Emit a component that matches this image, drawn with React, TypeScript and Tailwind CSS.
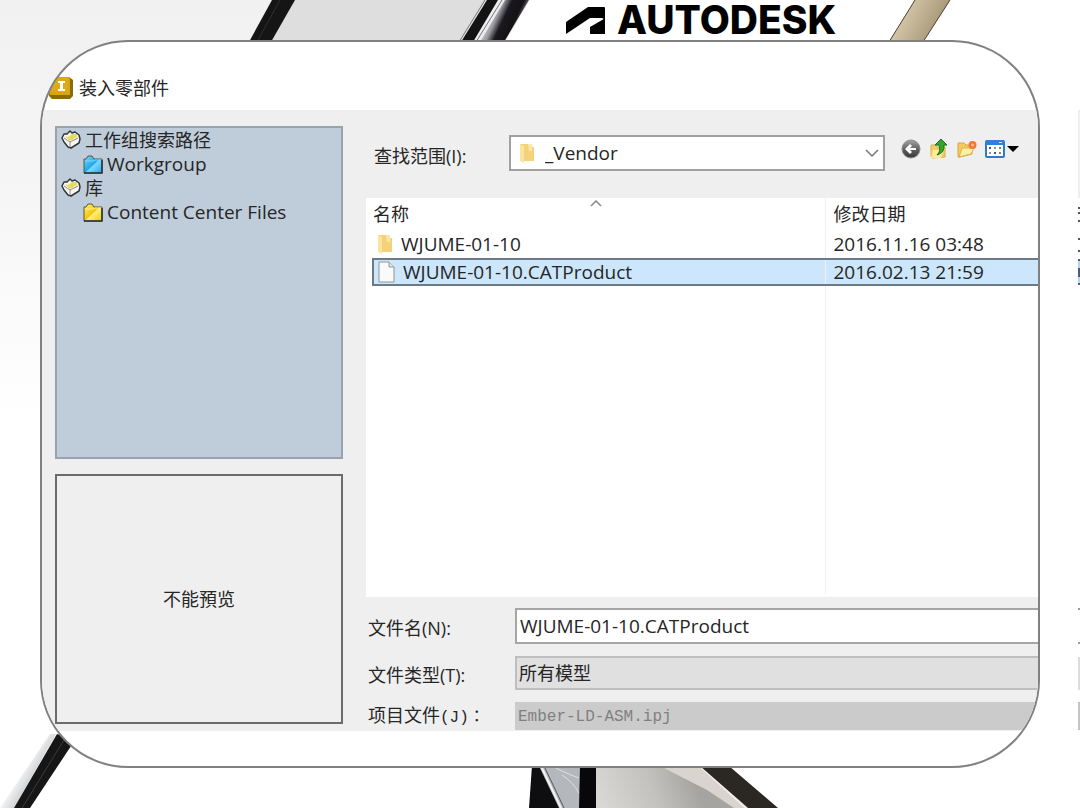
import type { ReactNode } from "react";

const files = [
  { name: "WJUME-01-10", date: "2016.11.16 03:48", kind: "folder", selected: false },
  { name: "WJUME-01-10.CATProduct", date: "2016.02.13 21:59", kind: "file", selected: true },
];

function Backdrop() {
  return (
    <svg
      aria-hidden
      className="absolute inset-0 -z-10 h-full w-full"
      viewBox="0 0 1080 808"
      preserveAspectRatio="none"
    >
      <defs>
        <linearGradient id="wall" x1="0" y1="0" x2="0" y2="1">
          <stop offset="0" stopColor="#f1f1f1" />
          <stop offset="0.4" stopColor="#f5f5f5" />
          <stop offset="1" stopColor="#ffffff" />
        </linearGradient>
        <linearGradient id="tube" gradientUnits="userSpaceOnUse" x1="484" y1="15" x2="516" y2="30">
          <stop offset="0" stopColor="#f4f4f6" />
          <stop offset="0.35" stopColor="#9b9ba3" />
          <stop offset="0.55" stopColor="#1b181d" />
          <stop offset="0.85" stopColor="#151216" />
          <stop offset="1" stopColor="#6e6a70" />
        </linearGradient>
        <linearGradient id="brass" gradientUnits="userSpaceOnUse" x1="900" y1="12" x2="935" y2="30">
          <stop offset="0" stopColor="#d8cbab" />
          <stop offset="1" stopColor="#a8997a" />
        </linearGradient>
        <linearGradient id="steel" gradientUnits="userSpaceOnUse" x1="596" y1="808" x2="690" y2="770">
          <stop offset="0" stopColor="#dcdad6" />
          <stop offset="0.6" stopColor="#c3c1bd" />
          <stop offset="1" stopColor="#a6a4a1" />
        </linearGradient>
        <linearGradient id="shade" gradientUnits="userSpaceOnUse" x1="24" y1="760" x2="42" y2="771">
          <stop offset="0" stopColor="#ffffff" />
          <stop offset="1" stopColor="#c4c6c8" />
        </linearGradient>
      </defs>
      <rect width="1080" height="808" fill="#fff" />
      <rect width="300" height="420" fill="url(#wall)" />
      <path d="M295 0H490L462 42H270Z" fill="#dedede" />
      <path d="M272 0H295L271 42H249Z" fill="#151515" />
      <path d="M280 0L257 42" stroke="#303030" strokeWidth="1" />
      <path d="M488 0H530L505 42H462Z" fill="#ededf0" />
      <path d="M487 0H498L473 42H461Z" fill="#131313" />
      <path d="M485 0L459 42M502 0L476 42" stroke="#777" strokeWidth="1" />
      <path d="M505 0H529L504 42H480Z" fill="url(#tube)" />
      <path d="M915 0H950L923 42H889Z" fill="url(#brass)" />
      <path d="M915 0L889 42M950 0L923 42" stroke="#47402f" strokeWidth="1" />
      <path d="M56 734L14 808H0L50 734Z" fill="url(#shade)" />
      <path d="M57 734L75 740L30 808H14Z" fill="#161616" />
      <path d="M64 740L22 808" stroke="#3c3c3c" strokeWidth="1" />

      <path d="M532 766H580V808H530Z" fill="#b4b7bb" />
      <path d="M532 766H539L559 808H529Z" fill="#0e0e10" />
      <path d="M541 766L561 808" stroke="#f3f3f3" strokeWidth="2" />
      <path d="M544 766L564 808" stroke="#55575b" strokeWidth="1" />
      <path d="M556 768Q570 775 579 778M562 775Q573 782 579 793" fill="none" stroke="#dfe1e3" strokeWidth="1" />
      <path d="M580 766H596V808H579Z" fill="#08080a" />
      <path d="M596 766H700L747 808H596Z" fill="url(#steel)" />
      <path d="M660 766H700L748 808H734L707 790Z" fill="#d9d4cd" />
      <path d="M702 768L746 808" stroke="#f3efe9" strokeWidth="2" />
      <path d="M700 766H729L778 808H748Z" fill="#2b2823" />

      <path d="M1078 110H1080V198H1078Z" fill="#efefef" />
      <path d="M1078 207H1080V209H1078ZM1078 212H1080V214H1078ZM1078 220H1080V222H1078ZM1078 238H1080V240H1078ZM1078 250H1080V252H1078Z" fill="#555" />
      <path d="M1078 259H1080V285H1078Z" fill="#b9d3ea" />
      <path d="M1078 259H1080V261H1078ZM1078 268H1080V277H1078ZM1078 283H1080V285H1078Z" fill="#515a78" />
      <path d="M1078 608H1080V610H1078ZM1078 642H1080V644H1078Z" fill="#999" />
      <path d="M1078 657H1080V690H1078Z" fill="#dcdcdc" />
      <path d="M1078 702H1080V730H1078Z" fill="#c4c4c4" />
    </svg>
  );
}

function AutodeskLogo() {
  return (
    <div className="flex items-center gap-3">
      <svg aria-hidden viewBox="0 0 40 28" className="h-7 w-10">
        <path d="M1 28V16L23 1H39Q40 1 40 2V28H25V21L38 13.500Q39 12 37 12H25Z" fill="#000" />
      </svg>
      <span className="font-[Inter,'Liberation_Sans',sans-serif] text-[39px] leading-10 font-extrabold text-black">
        AUTODESK
      </span>
    </div>
  );
}

function AppIcon() {
  return (
    <svg aria-hidden viewBox="0 0 24 22" className="h-[22px] w-6 shrink-0">
      <path d="M3 0H20L24 3V19L21 22H3L0 19V16Z" fill="#8b6a0a" />
      <path d="M3 0H20L21 2V18H1V14Z" fill="#d9a40f" />
      <path d="M4 1H19V15H3Z" fill="#deab18" />
      <path d="M9 4H16V6H14V12H16V14H9V12H11V6H9Z" fill="#fff" />
    </svg>
  );
}

function BookIcon() {
  return (
    <svg aria-hidden viewBox="0 0 20 20" className="h-5 w-5 shrink-0">
      <path
        d="M1 8L3 4L6 4L9 1L11 3L14 2L18 5L19 9L18 13L10 18L7 17L3 12Z"
        fill="#f8f7f2"
        stroke="#34363a"
        strokeWidth="1.500"
        strokeLinejoin="round"
      />
      <path d="M4 6L7 7L11 4L16 4L16 7L9 11Z" fill="#e3de62" />
      <path d="M3 8L9 12L17 8M9 12V17" fill="none" stroke="#8d8e86" strokeWidth="1" />
    </svg>
  );
}

function TreeFolder({ id, from, to }: { id: string; from: string; to: string }) {
  return (
    <svg aria-hidden viewBox="0 0 20 19" className="h-[19px] w-5 shrink-0">
      <defs>
        <linearGradient id={id} x1="0" y1="0" x2="1" y2="1">
          <stop offset="0" stopColor={from} />
          <stop offset="0.5" stopColor={to} />
          <stop offset="0.55" stopColor={from} />
          <stop offset="1" stopColor={to} />
        </linearGradient>
      </defs>
      <path d="M1 4H3L5 1H9L11 4H19V18H1Z" fill={`url(#${id})`} stroke="#5a5634" strokeWidth="1" />
      <path d="M2 6H10L12 5H18" fill="none" stroke={from} strokeWidth="1" />
      <path d="M1 18H19V5" fill="none" stroke="#253238" strokeWidth="1.500" />
    </svg>
  );
}

function FolderIcon({ className = "" }: { className?: string }) {
  return (
    <svg aria-hidden viewBox="0 0 16 20" className={`h-5 w-4 shrink-0 ${className}`}>
      <path d="M1 1H13V4H15V18H1Z" fill="#f5d277" />
      <path d="M1 1L5 3V20L1 18Z" fill="#fbe3a0" />
      <path d="M9 1H13V8H10Z" fill="#fae7ae" />
    </svg>
  );
}

function FileIcon() {
  return (
    <svg aria-hidden viewBox="0 0 17 22" className="h-[22px] w-[17px] shrink-0">
      <path d="M1 1H11L16 6V21H1Z" fill="#fafafa" stroke="#8e959b" />
      <path d="M11 1V6H16" fill="#e4e6e8" stroke="#8e959b" />
    </svg>
  );
}

function ToolButton({ label, children }: { label: string; children: ReactNode }) {
  return (
    <button type="button" aria-label={label} className="flex h-7 min-w-7 items-center justify-center">
      {children}
    </button>
  );
}

function Toolbar() {
  return (
    <div className="flex shrink-0 self-start">
      <ToolButton label="后退">
        <svg viewBox="0 0 20 20" className="h-5 w-5">
          <defs>
            <linearGradient id="ball" x1="0" y1="0" x2="0" y2="1">
              <stop offset="0" stopColor="#a4a4a4" />
              <stop offset="0.5" stopColor="#636363" />
              <stop offset="1" stopColor="#383838" />
            </linearGradient>
          </defs>
          <circle cx="10" cy="10" r="9" fill="url(#ball)" stroke="#8b8b8b" />
          <path d="M4 10L9 5L11 7L9 9H15V11H9L11 13L9 15Z" fill="#fff" />
        </svg>
      </ToolButton>
      <ToolButton label="向上一级">
        <svg viewBox="0 0 20 20" className="h-5 w-5">
          <path d="M2 6H7L8 8H16V18L3 19L2 17Z" fill="#f0cf67" stroke="#dcae45" />
          <path d="M4 11H14L12 19H2Z" fill="#fbeb9b" />
          <path d="M12 0L18 6H15C15 11 14 14 8 16C11 13 11 10 10 6H6Z" fill="#35a62b" stroke="#187317" />
        </svg>
      </ToolButton>
      <ToolButton label="新建文件夹">
        <svg viewBox="0 0 20 20" className="h-5 w-5">
          <path d="M1 4H7L9 6H15V15L3 18H1Z" fill="#f2cb5c" stroke="#dba63a" />
          <path d="M5 9H17L14 15L2 18Z" fill="#fdf0a6" stroke="#dba63a" strokeWidth="0.8" />
          <circle cx="15.500" cy="6" r="4" fill="#f4763a" />
          <circle cx="15.500" cy="6" r="1.500" fill="#ffc18a" />
        </svg>
      </ToolButton>
      <ToolButton label="查看">
        <svg viewBox="0 0 40 20" className="h-5 w-10">
          <rect x="5" y="2" width="18" height="16" rx="1" fill="#fff" stroke="#2f79cf" strokeWidth="2" />
          <rect x="5" y="1" width="18" height="5" fill="#2f7fdd" />
          <path d="M18 3H21V4H18Z" fill="#d8ecff" />
          <path d="M8 8H10V10H8ZM13 13H15V15H13Z" fill="#38568e" />
          <path d="M13 8H15V10H13ZM8 13H10V15H8Z" fill="#8a93b4" />
          <path d="M18 8H20V10H18Z" fill="#4ba357" />
          <path d="M18 13H20V15H18Z" fill="#c76a5b" />
          <path d="M26 7H38L32 13Z" fill="#000" />
        </svg>
      </ToolButton>
    </div>
  );
}

function LocationTree() {
  return (
    <ul className="h-[333px] border-2 border-[#98a3af] bg-[#bfcddb] pl-1 leading-6">
      <li>
        <div className="flex items-center gap-1">
          <BookIcon />
          工作组搜索路径
        </div>
        <ul className="pl-[22px]">
          <li className="flex items-center gap-1 text-[19px]">
            <TreeFolder id="blue-folder" from="#7fd8ff" to="#1da7ee" />
            Workgroup
          </li>
        </ul>
      </li>
      <li>
        <div className="flex items-center gap-1">
          <BookIcon />
          库
        </div>
        <ul className="pl-[22px]">
          <li className="flex items-center gap-1 text-[19px]">
            <TreeFolder id="yellow-folder" from="#fff27c" to="#f7c40c" />
            Content Center Files
          </li>
        </ul>
      </li>
    </ul>
  );
}

function FileTable() {
  return (
    <div className="relative flex-1 overflow-hidden bg-white pl-1.5">
      <table className="w-full table-fixed border-collapse text-left">
        <thead>
          <tr className="h-8">
            <th className="w-[452px] border-r border-[#edf0f7] font-normal">名称</th>
            <th className="pl-2 font-normal">修改日期</th>
          </tr>
        </thead>
        <tbody className="text-[19px]">
          {files.map((file) => (
            <tr
              key={file.name}
              className={
                file.selected ? "h-[26px] border-y-2 border-l-2 border-[#6c7a86] bg-[#cce6fb]" : "h-[29px]"
              }
            >
              <td className="border-r border-r-[#edf0f7] pl-1 leading-6">
                <div className="flex items-center gap-2">
                  {file.kind === "folder" ? <FolderIcon /> : <FileIcon />}
                  {file.name}
                </div>
              </td>
              <td className="pl-2 leading-6">{file.date}</td>
            </tr>
          ))}
          <tr aria-hidden className="h-[309px]">
            <td className="border-r border-[#edf0f7]" />
            <td />
          </tr>
        </tbody>
      </table>
      <svg aria-hidden viewBox="0 0 12 7" className="absolute top-0.5 left-[224px] h-[7px] w-3">
        <path d="M1 6L6 1L11 6" fill="none" stroke="#888" strokeWidth="1.500" />
      </svg>
    </div>
  );
}

export default function App() {
  return (
    <main className="relative isolate min-h-screen pb-10 font-['Open_Sans','Noto_Sans_CJK_SC',sans-serif] text-[18px] text-[#262626]">
      <Backdrop />
      <header className="flex h-10 items-center pl-[565px]">
        <AutodeskLogo />
      </header>

      <section className="mx-10 overflow-hidden rounded-[88px] border-2 border-[#808080] bg-white pb-[35px]">
        <h1 className="flex h-[68px] items-center gap-1.5 pt-6 pl-[7px]">
          <AppIcon />
          装入零部件
        </h1>

        <div className="flex gap-[23px] bg-[#efefef] pl-[13px]">
          <aside className="flex w-72 shrink-0 flex-col gap-[15px] pt-4 pb-[7px]">
            <LocationTree />
            <div className="flex h-[250px] items-center justify-center border-2 border-[#6b6b6b]">
              不能預览
            </div>
          </aside>

          <form className="flex min-w-0 flex-1 flex-col pt-[25px] pb-[1px]">
            <div className="mb-[27px] flex h-9 items-center pr-[17px]">
              <label htmlFor="folder" className="w-[143px] shrink-0 pt-1.5 pl-2">
                查找范围(I):
              </label>
              <div className="relative min-w-0 flex-1">
                <select
                  id="folder"
                  className="block h-9 w-full appearance-none border-2 border-[#a0a0a0] bg-white pl-[34px] text-[19px]"
                >
                  <option>_Vendor</option>
                </select>
                <FolderIcon className="pointer-events-none absolute top-2 left-2.5" />
                <svg
                  aria-hidden
                  viewBox="0 0 14 9"
                  className="pointer-events-none absolute top-3.5 right-1.5 h-[9px] w-3.5"
                >
                  <path d="M1 1L7 7L13 1" fill="none" stroke="#777" strokeWidth="1.500" />
                </svg>
              </div>
              <div className="w-3 shrink-0" />
              <Toolbar />
            </div>

            <FileTable />

            <div className="mt-[11px] flex items-center">
              <label htmlFor="name" className="w-[149px] shrink-0 pt-1 pl-0.5">
                文件名(N):
              </label>
              <input
                id="name"
                defaultValue="WJUME-01-10.CATProduct"
                className="h-9 min-w-0 flex-1 border-2 border-r-0 border-[#a6a6a6] bg-white pl-[3px] text-[19px]"
              />
            </div>
            <div className="mt-3 flex items-center">
              <label htmlFor="type" className="w-[149px] shrink-0 pt-1 pl-0.5">
                文件类型(T):
              </label>
              <select
                id="type"
                className="h-[34px] min-w-0 flex-1 appearance-none border-2 border-r-0 border-[#bebebe] bg-[#e0e0e0] pl-0.5"
              >
                <option>所有模型</option>
              </select>
            </div>
            <div className="mt-3 flex items-center">
              <label
                htmlFor="project"
                className="w-[149px] shrink-0 pl-0.5 font-['Noto_Sans_CJK_SC',sans-serif] leading-6"
              >
                项目文件
                <span className="font-['Liberation_Mono','Noto_Sans_CJK_TC',monospace] text-base">
                  (J)：
                </span>
              </label>
              <input
                id="project"
                disabled
                defaultValue="Ember-LD-ASM.ipj"
                className="h-7 min-w-0 flex-1 bg-[#cbcbcb] pt-0.5 pl-[3px] font-['Liberation_Mono',monospace] text-base text-[#808080]"
              />
            </div>
          </form>
        </div>
      </section>
    </main>
  );
}
